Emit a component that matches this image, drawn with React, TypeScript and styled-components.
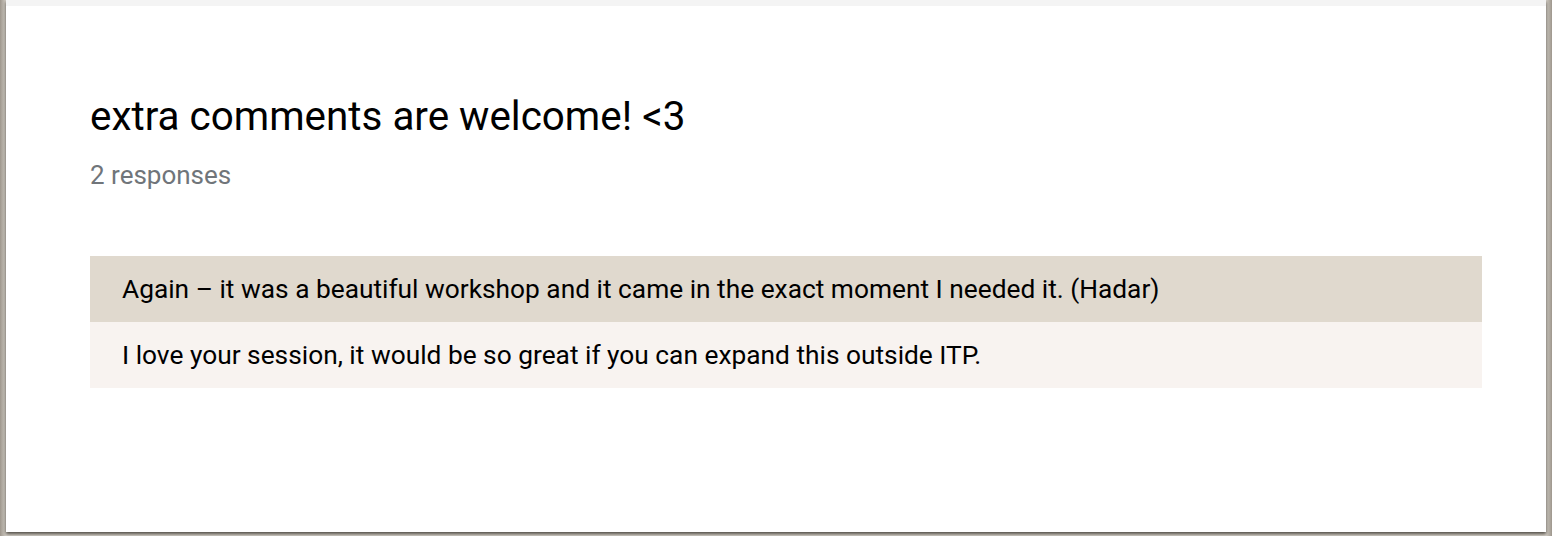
import React from "react";
import styled, { createGlobalStyle } from "styled-components";

const Global = createGlobalStyle`
  html, body { margin: 0; padding: 0; }
  body {
    background: linear-gradient(90deg, #9d968c 0px, #d3cec6 6px, #d3cec6 calc(100% - 6px), #9d968c 100%);
    font-family: Roboto, "Noto Sans", sans-serif;
    width: 1552px;
    height: 536px;
    overflow: hidden;
  }
`;

const Card = styled.div`
  margin: 0 6px;
  height: 532px;
  box-sizing: border-box;
  background: #fff;
  border-top: 6px solid #f4f4f4;
  box-shadow: 0 2px 3px rgba(60, 55, 48, 0.85);
  padding: 87px 64px 0 84px;
`;

const Title = styled.h1`
  margin: 0;
  font-size: 40.4px;
  font-weight: 400;
  line-height: 48px;
  color: #000;
`;

const Count = styled.div`
  margin-top: 18px;
  font-size: 26px;
  line-height: 32px;
  color: #70757a;
`;

const List = styled.div`
  margin-top: 65px;
  display: flex;
  flex-direction: column;
`;

const Row = styled.div<{ $alt?: boolean }>`
  height: 66px;
  box-sizing: border-box;
  padding: 17px 0 0 32px;
  font-size: 26.3px;
  line-height: 32px;
  color: #000;
  background: ${(p) => (p.$alt ? "#f8f3f0" : "#e0d9ce")};
`;

const responses = [
  "Again – it was a beautiful workshop and it came in the exact moment I needed it. (Hadar)",
  "I love your session, it would be so great if you can expand this outside ITP.",
];

export default function App() {
  return (
    <>
      <Global />
      <Card>
        <Title>extra comments are welcome! &lt;3</Title>
        <Count>2 responses</Count>
        <List>
          {responses.map((r, i) => (
            <Row key={i} $alt={i % 2 === 1}>
              {r}
            </Row>
          ))}
        </List>
      </Card>
    </>
  );
}
